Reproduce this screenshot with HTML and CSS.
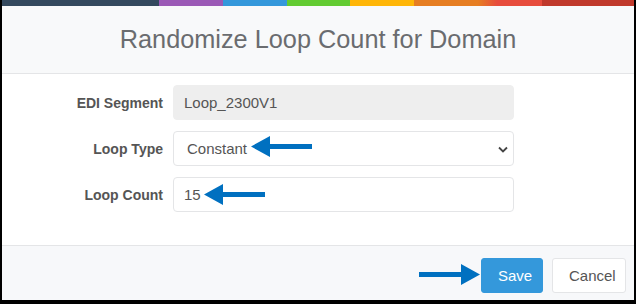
FILE: index.html
```html
<!DOCTYPE html>
<html lang="en">
<head>
    <meta charset="UTF-8">
    <meta name="viewport" content="width=device-width, initial-scale=1.0">
    <title>Randomize Loop Count for Domain</title>
    <link rel="stylesheet" href="styles.css">
</head>
<body>
    <div class="modal">
        <div class="color-line">
            <span class="c-dark"></span>
            <span class="c-purple"></span>
            <span class="c-blue"></span>
            <span class="c-green"></span>
            <span class="c-yellow"></span>
            <span class="c-orange"></span>
            <span class="c-red"></span>
            <span class="c-darkred"></span>
        </div>
        <div class="modal-header">
            <h4 class="modal-title">Randomize Loop Count for Domain</h4>
        </div>
        <div class="modal-body">
            <form class="form">
                <label class="label">EDI Segment</label>
                <div class="field">
                    <input class="control" type="text" value="Loop_2300V1" disabled>
                </div>

                <label class="label">Loop Type</label>
                <div class="field">
                    <select class="control select">
                        <option>Constant</option>
                        <option>Random</option>
                    </select>
                    <svg class="chevron" width="10" height="7" viewBox="0 0 10 7">
                        <path d="M1 1.5 L5 5.5 L9 1.5" fill="none" stroke="#444" stroke-width="1.8"/>
                    </svg>
                    <svg class="arrow arrow-type" width="61" height="21" viewBox="0 0 61 21">
                        <polygon points="0,10.5 19,0 19,8 61,8 61,13 19,13 19,21" fill="#0070c0"/>
                    </svg>
                </div>

                <label class="label">Loop Count</label>
                <div class="field">
                    <input class="control" type="text" value="15">
                    <svg class="arrow arrow-count" width="61" height="21" viewBox="0 0 61 21">
                        <polygon points="0,10.5 19,0 19,8 61,8 61,13 19,13 19,21" fill="#0070c0"/>
                    </svg>
                </div>
            </form>
        </div>
        <div class="modal-footer">
            <svg class="save-arrow" width="61" height="21" viewBox="0 0 61 21">
                <polygon points="61,10.5 42,0 42,8 0,8 0,13 42,13 42,21" fill="#0070c0"/>
            </svg>
            <button class="btn btn-primary" type="button">Save</button>
            <button class="btn btn-default" type="button">Cancel</button>
        </div>
    </div>
</body>
</html>
```

FILE: styles.css
```css
html, body {
    margin: 0;
    height: 100%;
}
body {
    background-color: #000;
    padding: 0 2px 4px 2px;
    box-sizing: border-box;
    font-family: "Liberation Sans", Arial, sans-serif;
}
.modal {
    background-color: #fff;
    height: 300px;
    display: flex;
    flex-direction: column;
}
.color-line {
    display: flex;
    height: 6px;
}
.color-line span {
    display: block;
    height: 100%;
}
.c-dark { width: 157px; background-color: #34495e; }
.c-purple { width: 64px; background-color: #9b59b6; }
.c-blue { width: 64px; background-color: #3498db; }
.c-green { width: 63px; background-color: #62cb31; }
.c-yellow { width: 64px; background-color: #ffb606; }
.c-orange { width: 64px; background-color: #e67e22; }
.c-red { width: 64px; background: linear-gradient(to right, #e67e22, #e74c3c 30%, #e74c3c); }
.c-darkred { flex: 1; background-color: #c0392b; }

.modal-header {
    height: 67px;
    background-color: #f8f9fa;
    border-bottom: 1px solid #e4e5e7;
    display: flex;
    align-items: center;
    justify-content: center;
}
.modal-title {
    margin: 0;
    font-size: 25.3px;
    font-weight: normal;
    color: #6a6c6f;
}

.modal-body {
    height: 171px;
    padding-top: 11px;
    box-sizing: border-box;
}
.form {
    display: grid;
    grid-template-columns: 161px 341px;
    column-gap: 10px;
    row-gap: 11px;
    align-items: center;
}
.label {
    text-align: right;
    font-size: 14px;
    font-weight: bold;
    color: #555;
}
.field {
    position: relative;
    height: 35px;
}
.control {
    width: 100%;
    height: 35px;
    box-sizing: border-box;
    border: 1px solid #e4e5e7;
    border-radius: 4px;
    padding: 0 10px;
    font-family: "Liberation Sans", Arial, sans-serif;
    font-size: 15px;
    color: #555;
    background-color: #fff;
    outline: none;
}
.control:disabled {
    background-color: #eee;
    color: #555;
    border-color: #eee;
}
.select {
    appearance: none;
    -webkit-appearance: none;
    padding-left: 13px;
}
.chevron {
    position: absolute;
    right: 6px;
    top: 15px;
    pointer-events: none;
}
.arrow {
    position: absolute;
}
.arrow-type {
    left: 78px;
    top: 5px;
}
.arrow-count {
    left: 31px;
    top: 7px;
}

.modal-footer {
    flex: 1;
    background-color: #f7f8fa;
    border-top: 1px solid #e4e5e7;
    display: flex;
    justify-content: flex-end;
    align-items: flex-start;
    padding: 12px 8px 0 0;
    gap: 9px;
}
.save-arrow {
    margin-top: 6px;
    margin-right: -8px;
}
.btn {
    height: 35px;
    padding: 0 16px;
    border-radius: 3px;
    font-family: "Liberation Sans", Arial, sans-serif;
    font-size: 15px;
    cursor: pointer;
}
.btn-primary {
    width: 62px;
    background-color: #3498db;
    border: 1px solid #3498db;
    color: #fff;
}
.btn-default {
    width: 74px;
    background-color: #fff;
    border: 1px solid #e4e5e7;
    color: #555;
}
```
